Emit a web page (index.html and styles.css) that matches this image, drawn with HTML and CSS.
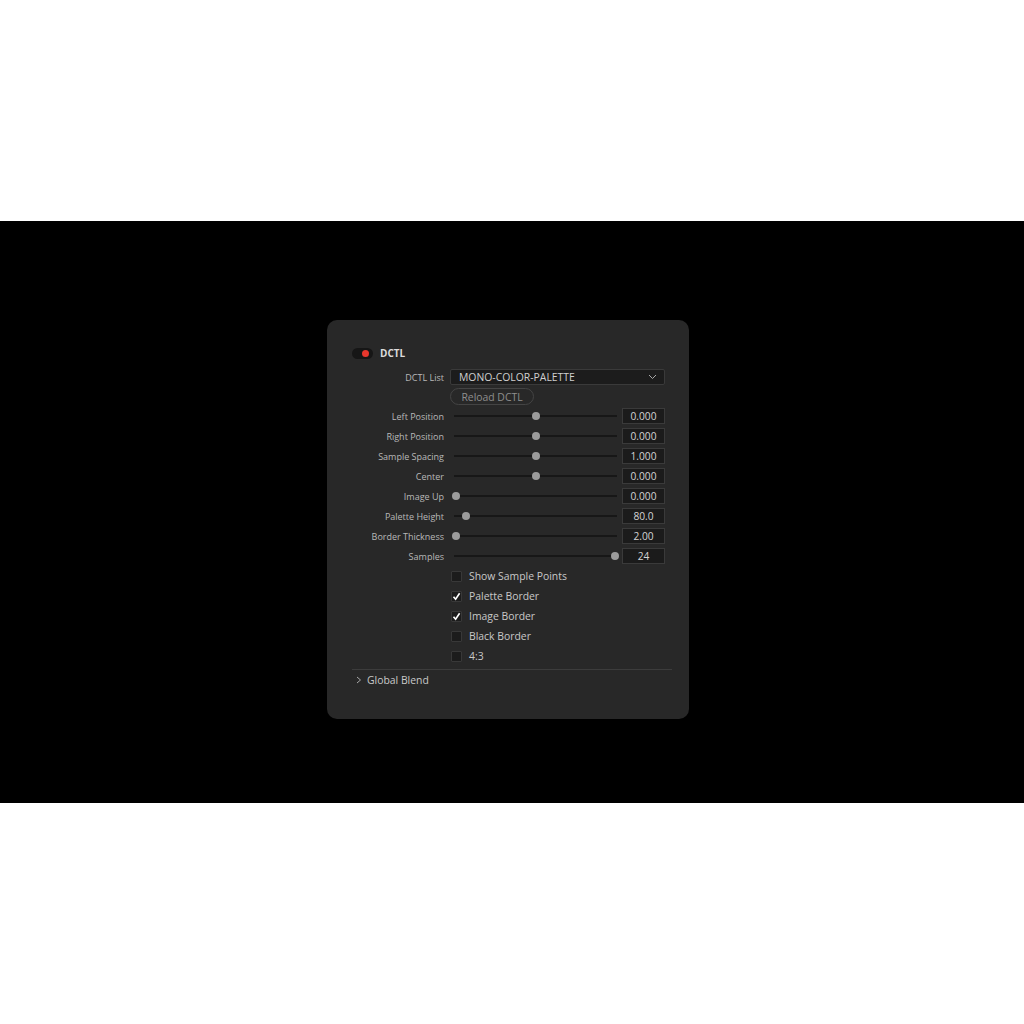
FILE: index.html
```html
<!DOCTYPE html>
<html>
<head>
<meta charset="utf-8">
<link rel="stylesheet" href="styles.css">
</head>
<body>
<div class="top"></div>
<div class="band">
  <div class="panel">
    <div class="header">
      <span class="toggle"><span class="dot"></span></span>
      <span class="title">DCTL</span>
    </div>
    <div class="grid">
      <div class="label">DCTL List</div>
      <div class="ctrl">
        <div class="select">
          <span>MONO-COLOR-PALETTE</span>
          <svg class="chev" width="9" height="6" viewBox="0 0 9 6"><path d="M1 1 L4.5 4.5 L8 1" fill="none" stroke="#a8a8a8" stroke-width="1"/></svg>
        </div>
      </div>
      <div class="label"></div>
      <div class="ctrl"><div class="btn">Reload DCTL</div></div>

      <div class="label">Left Position</div>
      <div class="ctrl slider"><div class="track"><span class="knob" style="left:50%"></span></div><div class="val">0.000</div></div>
      <div class="label">Right Position</div>
      <div class="ctrl slider"><div class="track"><span class="knob" style="left:50%"></span></div><div class="val">0.000</div></div>
      <div class="label">Sample Spacing</div>
      <div class="ctrl slider"><div class="track"><span class="knob" style="left:50%"></span></div><div class="val">1.000</div></div>
      <div class="label">Center</div>
      <div class="ctrl slider"><div class="track"><span class="knob" style="left:50%"></span></div><div class="val">0.000</div></div>
      <div class="label">Image Up</div>
      <div class="ctrl slider"><div class="track"><span class="knob" style="left:1%"></span></div><div class="val">0.000</div></div>
      <div class="label">Palette Height</div>
      <div class="ctrl slider"><div class="track"><span class="knob" style="left:7.5%"></span></div><div class="val">80.0</div></div>
      <div class="label">Border Thickness</div>
      <div class="ctrl slider"><div class="track"><span class="knob" style="left:1%"></span></div><div class="val">2.00</div></div>
      <div class="label">Samples</div>
      <div class="ctrl slider"><div class="track"><span class="knob" style="left:99%"></span></div><div class="val">24</div></div>

      <div class="label"></div>
      <div class="ctrl check"><span class="box"></span><span>Show Sample Points</span></div>
      <div class="label"></div>
      <div class="ctrl check"><span class="box"><svg width="9" height="9" viewBox="0 0 9 9"><path d="M1.5 4.8 L3.6 7.2 L7.6 1.2" fill="none" stroke="#ffffff" stroke-width="1.6"/></svg></span><span>Palette Border</span></div>
      <div class="label"></div>
      <div class="ctrl check"><span class="box"><svg width="9" height="9" viewBox="0 0 9 9"><path d="M1.5 4.8 L3.6 7.2 L7.6 1.2" fill="none" stroke="#ffffff" stroke-width="1.6"/></svg></span><span>Image Border</span></div>
      <div class="label"></div>
      <div class="ctrl check"><span class="box"></span><span>Black Border</span></div>
      <div class="label"></div>
      <div class="ctrl check"><span class="box"></span><span>4:3</span></div>
    </div>
    <div class="sep"></div>
    <div class="group">
      <svg width="6" height="8" viewBox="0 0 6 8"><path d="M1 1 L4.5 4 L1 7" fill="none" stroke="#a8a8a8" stroke-width="1"/></svg>
      <span>Global Blend</span>
    </div>
  </div>
</div>
<div class="bottom"></div>
</body>
</html>
```
FILE: styles.css
```css
html, body {
  margin: 0;
  padding: 0;
  background: #ffffff;
  font-family: "Open Sans", "Noto Sans", sans-serif;
}
.top { height: 221px; }
.band {
  height: 582px;
  background: #000;
  box-sizing: border-box;
  padding-top: 99px;
  padding-left: 327px;
}
.panel {
  width: 362px;
  height: 399px;
  box-sizing: border-box;
  background: #282828;
  border-radius: 10px;
  padding: 23px 24px 0 25px;
}
.header {
  height: 20px;
  display: flex;
  align-items: center;
}
.toggle {
  width: 21px;
  height: 11px;
  border-radius: 6px;
  background: #161616;
  position: relative;
  display: inline-block;
}
.dot {
  position: absolute;
  width: 7px;
  height: 7px;
  border-radius: 50%;
  background: #e8372d;
  left: 10px;
  top: 2px;
}
.title {
  margin-left: 7px;
  color: #dcdcdc;
  font-size: 10px;
  font-weight: 700;
}
.grid {
  margin-top: 4px;
  display: grid;
  grid-template-columns: 92px 215px;
  grid-template-rows: 20px 19px;
  column-gap: 6px;
  grid-auto-rows: 20px;
}
.label {
  color: #b8b8b8;
  font-size: 9px;
  text-align: right;
  white-space: nowrap;
  display: flex;
  align-items: center;
  justify-content: flex-end;
}
.ctrl {
  display: flex;
  align-items: center;
}
.select {
  width: 215px;
  height: 16px;
  box-sizing: border-box;
  background: #1c1c1c;
  border: 1px solid #3a3a3a;
  border-radius: 2px;
  display: flex;
  align-items: center;
  justify-content: space-between;
  padding: 0 7px 0 8px;
  color: #d0d0d0;
  font-size: 10.4px;
}
.chev { display: block; }
.btn {
  width: 84px;
  height: 17px;
  box-sizing: border-box;
  border: 1px solid #444;
  border-radius: 9px;
  color: #8e8e8e;
  font-size: 10.4px;
  display: flex;
  align-items: center;
  justify-content: center;
}
.track {
  position: relative;
  margin-left: 4px;
  width: 163px;
  height: 2px;
  background: #171717;
}
.knob {
  position: absolute;
  top: -3px;
  width: 8px;
  height: 8px;
  margin-left: -4px;
  border-radius: 50%;
  background: #9c9c9c;
}
.val {
  margin-left: 5px;
  width: 43px;
  height: 16px;
  box-sizing: border-box;
  background: #1b1b1b;
  border: 1px solid #3a3a3a;
  color: #d4d4d4;
  font-size: 10.2px;
  display: flex;
  align-items: center;
  justify-content: center;
}
.check {
  color: #c8c8c8;
  font-size: 10.4px;
}
.box {
  width: 11px;
  height: 11px;
  box-sizing: border-box;
  margin-left: 1px;
  margin-right: 7px;
  background: #1c1c1c;
  border: 1px solid #383838;
  border-radius: 1px;
  display: flex;
  align-items: center;
  justify-content: center;
}
.box svg { display: block; }
.sep {
  margin-top: 3px;
  margin-right: -7px;
  height: 1px;
  background: #3c3c3c;
}
.group {
  height: 20px;
  display: flex;
  align-items: center;
  color: #c8c8c8;
  font-size: 10.4px;
}
.group svg {
  margin-left: 4px;
  margin-right: 5px;
}
```
